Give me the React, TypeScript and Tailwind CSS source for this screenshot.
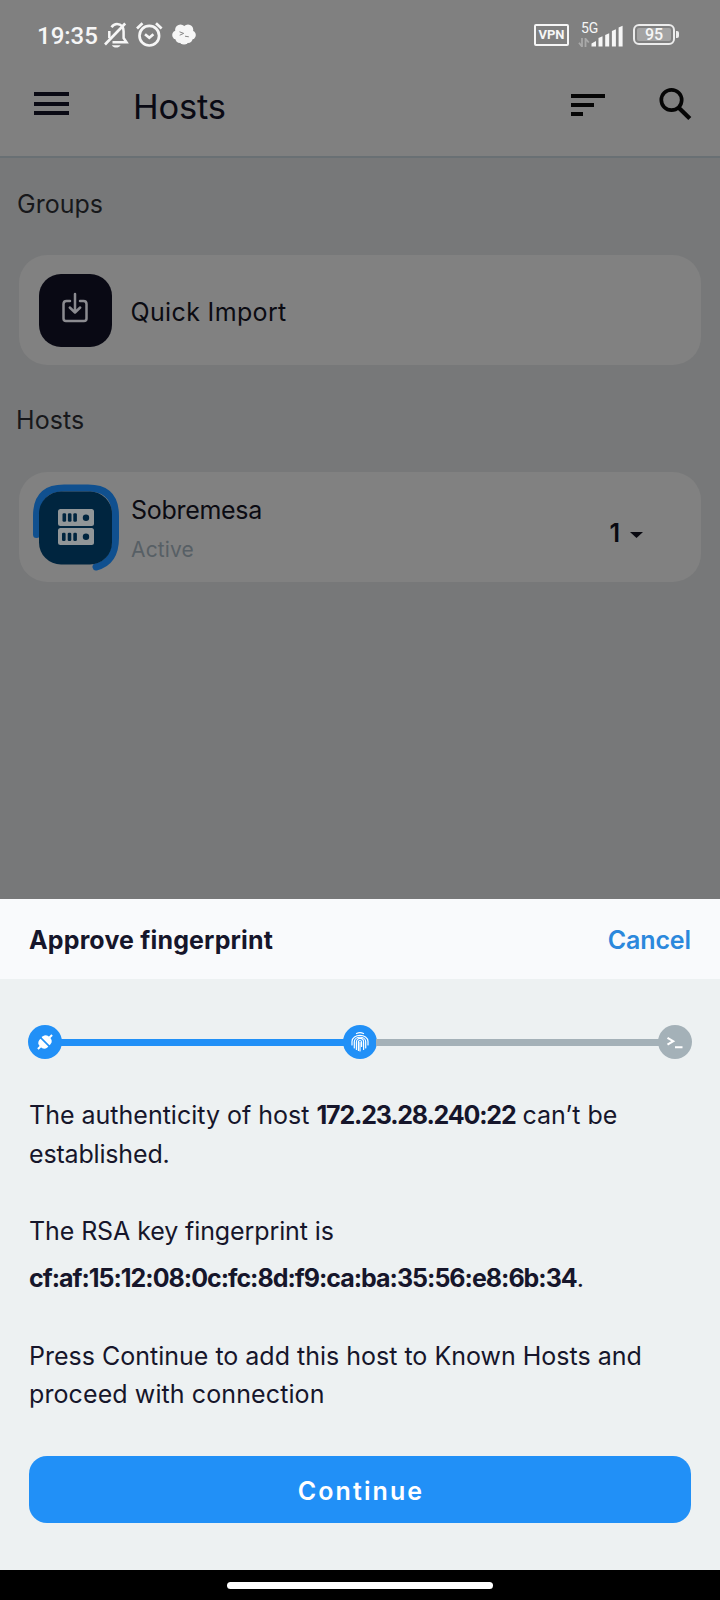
import type { ReactNode } from "react";

function StatusBar() {
  return (
    <div className="flex h-[68px] shrink-0 items-start pt-[21px] pl-[37px] pr-[41px] text-[#f6f6f6]">
      <span className="font-['Roboto',sans-serif] text-[24px] leading-[30px] font-medium">19:35</span>
      <svg className="ml-[5px] h-[28px] w-[26px]" viewBox="0 0 26 28" fill="none" stroke="currentColor" strokeWidth="2.500">
        <path d="M8.500 6.200C10 4 11.600 3 14 3c4.400 0 6.600 3.200 6.600 7.500v6.500L23.500 21.300H9.500" />
        <path d="M6.300 10v7.200" />
        <path d="M2 23.500 22.200 2.500" strokeWidth="2.600" />
        <path d="M8.800 24.200c1.600 3.200 7.200 3.200 8.800 0z" fill="currentColor" stroke="none" />
      </svg>
      <svg className="ml-[6px] h-[28px] w-[28px]" viewBox="0 0 28 28" fill="none" stroke="currentColor" strokeWidth="2.700">
        <circle cx="14.300" cy="14.700" r="9.800" />
        <path d="M10 13.300l4.300 3.400 4.100-3.400" />
        <path d="M2 7.500 7.500 2.300M21 2.300l5.600 5.200" />
      </svg>
      <svg className="ml-[8px] h-[26px] w-[26px]" viewBox="0 0 26 26" fill="currentColor">
        <circle cx="9.500" cy="8.800" r="5.400" />
        <circle cx="17" cy="8.800" r="5.300" />
        <circle cx="5.800" cy="14" r="4.600" />
        <circle cx="20.200" cy="14" r="4.600" />
        <circle cx="9" cy="17.500" r="4.600" />
        <circle cx="17" cy="17.500" r="4.600" />
        <circle cx="13" cy="18.800" r="4.800" />
        <path d="M7 8h12v10H7z" />
        <path d="M8.500 10.800l4.200 1.600-4 1.800M14 15.200l3.800.6" fill="none" stroke="#888" strokeWidth="1" />
      </svg>
      <div className="ml-auto mt-[2.500px] flex h-[22px] w-[35px] items-center justify-center rounded-[2px] border-[2.500px] border-[#f6f6f6] font-['Roboto',sans-serif] text-[13px] leading-none font-bold">
        VPN
      </div>
      <div className="ml-[9px] flex h-[26px] w-[46px] items-end">
        <div className="flex w-[13px] flex-col items-start">
          <span className="ml-[3px] font-['Roboto',sans-serif] text-[14px] leading-[14px]">5G</span>
          <svg className="mt-[3px] h-[9px] w-[12px]" viewBox="0 0 12 9" fill="none" stroke="#a9a9a9" strokeWidth="1.800">
            <path d="M4 0v8.500L1 4.800M7.500 9V.8L10.800 4.500" />
          </svg>
        </div>
        <svg className="h-[22px] w-[33px]" viewBox="0 0 33 22" fill="currentColor">
          <path d="M.5 21.500v-3l4.500-2.500v5.500zM7.500 13l4-1.800v10.300h-4zM14.200 10l4-1.800v13.300h-4zM20.900 6l4-1.800v17.300h-4zM27.600 2.600l4-1.800v20.700h-4z" />
        </svg>
      </div>
      <div className="ml-[9px] mt-[3px] flex items-center">
        <div className="flex h-[21px] w-[42px] rounded-[6px] border-2 border-[#ececec] p-[2px]">
          <div className="flex flex-1 items-center justify-center rounded-[2px] bg-[#a3a3a3] font-['Roboto',sans-serif] text-[16px] leading-none font-medium">95</div>
        </div>
        <div className="ml-[1px] h-[7px] w-[3px] rounded-r-[2px] bg-[#ececec]" />
      </div>
    </div>
  );
}

function AppBar() {
  return (
    <div className="flex h-[90px] shrink-0 items-start border-b-2 border-[#697074] pl-[34px] pr-[28px]">
      <div className="mt-[24px] flex w-[35px] flex-col gap-[5.600px]">
        <div className="h-[4px] bg-[#0a0a14]" />
        <div className="h-[4px] bg-[#0a0a14]" />
        <div className="h-[4px] bg-[#0a0a14]" />
      </div>
      <h1 className="ml-[64px] mt-[20px] text-[34.500px] leading-[38px] tracking-[-0.200px] text-[#0a0a14]">Hosts</h1>
      <div className="ml-auto mt-[26px] flex w-[34px] flex-col gap-[5.400px]">
        <div className="h-[3.800px] w-full bg-[#050505]" />
        <div className="h-[3.800px] w-[22.500px] bg-[#050505]" />
        <div className="h-[3.800px] w-[11.500px] bg-[#050505]" />
      </div>
      <svg className="ml-[53px] mt-[19px] h-[34px] w-[34px]" viewBox="0 0 34 34" fill="none" stroke="#050505" strokeWidth="3.700">
        <circle cx="13.500" cy="13" r="10.200" />
        <path d="M20.500 20.500l11.300 11" strokeWidth="4.300" />
      </svg>
    </div>
  );
}

function GroupCard() {
  return (
    <div className="flex h-[110px] items-center rounded-[28px] bg-[#818181] pl-[20px]">
      <div className="flex h-[73px] w-[73px] items-center justify-center rounded-[22px] bg-[#090914]">
        <svg className="-mt-[6px] mr-[2px] h-[32px] w-[28px]" viewBox="0 0 28 32" fill="none" stroke="#8b8b90" strokeWidth="2.500" strokeLinecap="round" strokeLinejoin="round">
          <path d="M9 10H5.500Q2.500 10 2.500 13v14.500q0 2.500 2.500 2.500h18q2.500 0 2.500-2.500V13q0-3-3-3H19" />
          <path d="M14 3v18M8.800 16.500l5.200 5 5.200-5" />
        </svg>
      </div>
      <span className="ml-[18.500px] mt-[3px] text-[25px] leading-[30px] tracking-[0.350px] text-[#0b0b12]">Quick Import</span>
    </div>
  );
}

function ServerTile() {
  return (
    <svg className="h-[90px] w-[90px]" viewBox="0 0 90 90">
      <path d="M5.500 53.500V35Q5.500 7 33 7H57Q84.500 7 84.500 35V57Q84.500 81 65 86" fill="none" stroke="#10508f" strokeWidth="7" strokeLinecap="round" />
      <rect x="8" y="10.500" width="73" height="73" rx="22" fill="#00253f" />
      <rect x="27" y="28" width="36" height="17" rx="2.500" fill="#919698" />
      <rect x="27" y="47" width="36" height="17" rx="2.500" fill="#919698" />
      <g fill="#00253f">
        <rect x="31.500" y="32.300" width="3.600" height="8.400" rx="1.300" />
        <rect x="36.900" y="32.300" width="3.600" height="8.400" rx="1.300" />
        <rect x="42.300" y="32.300" width="3.600" height="8.400" rx="1.300" />
        <circle cx="55" cy="36.700" r="3.200" />
        <rect x="31" y="51.700" width="3.600" height="8.400" rx="1.300" />
        <rect x="36.700" y="51.700" width="3.600" height="8.400" rx="1.300" />
        <rect x="42.300" y="51.700" width="3.600" height="8.400" rx="1.300" />
        <circle cx="55" cy="55.800" r="3.200" />
      </g>
    </svg>
  );
}

function HostCard() {
  return (
    <div className="flex h-[110px] items-start rounded-[28px] bg-[#818181] pl-[12px] pr-[58px] pt-[9px]">
      <ServerTile />
      <div className="ml-[10px] flex flex-col pt-[14px]">
        <span className="text-[25px] leading-[30px] tracking-[-0.300px] text-[#0b0b12]">Sobremesa</span>
        <span className="mt-[12px] text-[21px] leading-[26px] tracking-[0.150px] text-[#575f65]">Active</span>
      </div>
      <div className="ml-auto mt-[37px] flex items-center gap-[10px] text-[#090910]">
        <span className="text-[25px] leading-[30px] font-semibold">1</span>
        <svg className="mt-[3px] h-[6px] w-[13px]" viewBox="0 0 13 6" fill="currentColor">
          <path d="M0 0h13L6.500 6z" />
        </svg>
      </div>
    </div>
  );
}

function Step({ active, children }: { active: boolean; children: ReactNode }) {
  return (
    <div className={`flex h-[34px] w-[34px] shrink-0 items-center justify-center rounded-full ${active ? "bg-[#2190f7]" : "bg-[#a4b1b8]"}`}>
      {children}
    </div>
  );
}

function Stepper() {
  return (
    <div className="flex items-center px-[28px]">
      <Step active>
        <svg className="h-[18px] w-[18px] overflow-visible" viewBox="0 0 18 18">
          <g transform="rotate(-45 9 9)" fill="#fff">
            <path d="M8.200 3.500v11H6.500Q2.300 14 2.300 9t4.200-5.500z" />
            <path d="M9.800 3.500v11H11.500Q15.700 14 15.700 9t-4.200-5.500z" />
            <path d="M-1 8h4v2h-4zM15 8h4v2h-4z" />
          </g>
        </svg>
      </Step>
      <div className="-mx-px h-[7px] flex-1 bg-[#2190f7]" />
      <Step active>
        <svg className="h-[20px] w-[18px]" viewBox="0 0 18 20" fill="none" stroke="#fff" strokeWidth="1.200" strokeLinecap="round">
          <path d="M5.500 1.500Q9-.2 12.500 1.500" />
          <path d="M1 13V9.500C1 1.300 17 1.300 17 9.500V13" />
          <path d="M3.300 16V9.800C3.300 3.700 14.700 3.700 14.700 9.800V16" />
          <path d="M5.400 17.500v-7.300c0-5 7.200-5 7.200 0v7.300" />
          <path d="M7.400 18.500v-8c0-2.700 3.200-2.700 3.200 0v4" />
          <path d="M9 10.500v8.500" />
        </svg>
      </Step>
      <div className="-mx-px h-[7px] flex-1 bg-[#a4b1b8]" />
      <Step active={false}>
        <svg className="h-[14px] w-[18px]" viewBox="0 0 18 14" fill="none" stroke="#fff" strokeWidth="2.100">
          <path d="M1.500 2.800l5.700 3.400-5.700 3.400M9 12.200h7.500" />
        </svg>
      </Step>
    </div>
  );
}

function FingerprintSheet() {
  return (
    <section className="flex h-[671px] flex-col bg-[#edf1f2] text-[#16162b]">
      <header className="flex h-[80px] shrink-0 items-center justify-between bg-[#f9fafc] pl-[29px] pr-[29px] pt-[2px]">
        <h2 className="text-[25px] leading-[30px] font-bold tracking-[0.150px]">Approve fingerprint</h2>
        <button className="text-[25px] leading-[30px] font-semibold tracking-[-0.100px] text-[#2b88dc]">Cancel</button>
      </header>
      <div className="mt-[46px]">
        <Stepper />
      </div>
      <div className="mt-[37px] pl-[29px] text-[25px] leading-[38.600px] whitespace-nowrap">
        <p>
          The authenticity of host <b className="font-bold tracking-[-1.180px]">172.23.28.240:22</b> can’t be
        </p>
        <p className="tracking-[-0.170px]">established.</p>
        <p className="mt-[38.600px] tracking-[-0.100px]">The RSA key fingerprint is</p>
        <p className="mt-[8.300px]">
          <b className="font-bold tracking-[-1.010px]">cf:af:15:12:08:0c:fc:8d:f9:ca:ba:35:56:e8:6b:34</b>.
        </p>
        <p className="mt-[39.300px]">Press Continue to add this host to Known Hosts and</p>
        <p className="tracking-[0.100px]">proceed with connection</p>
      </div>
      <button className="mx-[29px] mt-auto mb-[47px] h-[67px] shrink-0 rounded-[18px] bg-[#2190f7] pt-[2px] pl-[2px] text-[25px] leading-[30px] font-semibold tracking-[2.100px] text-white">
        Continue
      </button>
    </section>
  );
}

export default function App() {
  return (
    <div className="flex h-[1600px] w-[720px] flex-col overflow-hidden bg-[#777879] font-['Inter',sans-serif]">
      <div className="flex flex-col bg-[#808080]">
        <StatusBar />
        <AppBar />
      </div>
      <main className="flex flex-1 flex-col px-[19px]">
        <h2 className="-ml-[2px] mt-[31px] text-[25px] leading-[30px] text-[#17181b]">Groups</h2>
        <div className="mt-[36px]">
          <GroupCard />
        </div>
        <h2 className="-ml-[3px] mt-[40px] text-[25px] leading-[30px] tracking-[0.100px] text-[#17181b]">Hosts</h2>
        <div className="mt-[37px]">
          <HostCard />
        </div>
      </main>
      <FingerprintSheet />
      <div className="flex h-[30px] shrink-0 justify-center bg-black pt-[12px]">
        <div className="h-[7px] w-[266px] rounded-full bg-white" />
      </div>
    </div>
  );
}
